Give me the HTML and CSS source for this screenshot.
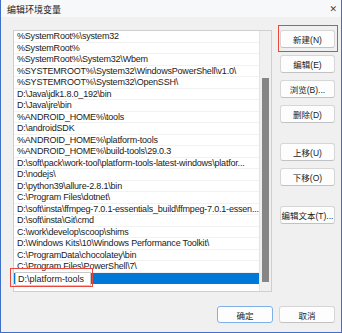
FILE: index.html
```html
<!DOCTYPE html>
<html lang="zh-CN">
<head>
<meta charset="utf-8">
<title>编辑环境变量</title>
<link rel="stylesheet" href="styles.css">
</head>
<body>
<div class="window">
  <div class="titlebar">
    <span class="title">编辑环境变量</span>
    <span class="close">✕</span>
  </div>
  <div class="main">
    <div class="list">
      <div class="rows">
        <div class="row">%SystemRoot%\system32</div>
        <div class="row">%SystemRoot%</div>
        <div class="row">%SystemRoot%\System32\Wbem</div>
        <div class="row">%SYSTEMROOT%\System32\WindowsPowerShell\v1.0\</div>
        <div class="row">%SYSTEMROOT%\System32\OpenSSH\</div>
        <div class="row">D:\Java\jdk1.8.0_192\bin</div>
        <div class="row">D:\Java\jre\bin</div>
        <div class="row">%ANDROID_HOME%\tools</div>
        <div class="row">D:\androidSDK</div>
        <div class="row">%ANDROID_HOME%\platform-tools</div>
        <div class="row">%ANDROID_HOME%\build-tools\29.0.3</div>
        <div class="row">D:\soft\pack\work-tool\platform-tools-latest-windows\platfor...</div>
        <div class="row">D:\nodejs\</div>
        <div class="row">D:\python39\allure-2.8.1\bin</div>
        <div class="row">C:\Program Files\dotnet\</div>
        <div class="row">D:\soft\insta\ffmpeg-7.0.1-essentials_build\ffmpeg-7.0.1-essen...</div>
        <div class="row">D:\soft\insta\Git\cmd</div>
        <div class="row">C:\work\develop\scoop\shims</div>
        <div class="row">D:\Windows Kits\10\Windows Performance Toolkit\</div>
        <div class="row">C:\ProgramData\chocolatey\bin</div>
        <div class="row">C:\Program Files\PowerShell\7\</div>
        <div class="row selected"><span class="edit">D:\platform-tools</span></div>
      </div>
      <div class="scroll"><div class="thumb"></div></div>
    </div>
    <div class="buttons">
      <button class="btn">新建(N)</button>
      <button class="btn">编辑(E)</button>
      <button class="btn">浏览(B)...</button>
      <button class="btn">删除(D)</button>
      <button class="btn gap">上移(U)</button>
      <button class="btn">下移(O)</button>
      <button class="btn gap">编辑文本(T)...</button>
    </div>
  </div>
  <div class="footer">
    <button class="btn primary">确定</button>
    <button class="btn">取消</button>
  </div>
  <div class="mark mark-new"></div>
  <div class="mark mark-edit"></div>
</div>
</body>
</html>
```
FILE: styles.css
```css
* { box-sizing: border-box; }
html, body { margin: 0; padding: 0; }
body {
  font-family: "Liberation Sans", "Noto Sans CJK SC", sans-serif;
  font-size: 9px;
  color: #1a1a1a;
  background: #fff;
}
.window {
  position: relative;
  width: 342px;
  height: 333px;
  border: 1px solid #3f6fc6;
  border-top: none;
  background: #f0f0f0;
  display: flex;
  flex-direction: column;
}
.titlebar {
  height: 17px;
  background: #f7f8fa;
  display: flex;
  align-items: center;
  justify-content: space-between;
  padding: 1px 4px 0 6px;
}
.title { font-family: "Noto Sans CJK SC", sans-serif; font-size: 9px; color: #222; }
.close { font-family: "DejaVu Sans", sans-serif; font-size: 9px; color: #444; }
.main {
  display: flex;
  padding: 13px 0 0 12px;
  gap: 8px;
}
.list {
  width: 259px;
  height: 262px;
  border: 1px solid #cfcfcf;
  background: #fff;
  display: flex;
}
.rows {
  flex: 1;
  min-width: 0;
}
.row {
  height: 11.5px;
  line-height: 11.5px;
  padding-left: 3px;
  letter-spacing: -0.2px;
  background-image: linear-gradient(#f2f2f2, #f2f2f2);
  background-size: 100% 1px;
  background-position: bottom;
  background-repeat: no-repeat;
  white-space: nowrap;
  overflow: hidden;
}
.row.selected {
  background: #0078d7;
  padding-left: 1px;
  overflow: visible;
}
.edit {
  display: inline-block;
  background: #fff;
  border: 1px solid #c8c8c8;
  height: 14px;
  line-height: 12px;
  width: 76px;
  padding-left: 2px;
  margin-top: -1px;
  vertical-align: top;
  letter-spacing: 0;
}
.scroll {
  width: 12px;
  background: #f0f0f0;
  border-left: 1px solid #e4e4e4;
  padding: 47px 2px 0 2px;
}
.thumb {
  width: 7px;
  height: 204px;
  background: #868686;
}
.buttons {
  width: 55px;
  display: flex;
  flex-direction: column;
  gap: 7px;
}
.btn {
  font-family: "Liberation Sans", "Noto Sans CJK SC", sans-serif;
  font-size: 8.5px;
  color: #1a1a1a;
  height: 18px;
  width: 55px;
  padding: 0;
  background: #fdfdfd;
  border: 1px solid #d6d6d6;
  border-bottom-color: #c2c2c2;
  border-radius: 3px;
}
.btn.gap { margin-top: 13px; }
.footer {
  margin-top: auto;
  display: flex;
  justify-content: flex-end;
  gap: 6px;
  padding: 0 6px 9px 0;
}
.footer .btn { width: 56px; height: 17px; }
.btn.primary { border-color: #7fb1e6; }
.mark {
  position: absolute;
  border: 1.5px solid #e8473c;
}
.mark-new { left: 277px; top: 25px; width: 60px; height: 27px; }
.mark-edit { left: 9px; top: 268px; width: 83px; height: 19px; }
```
